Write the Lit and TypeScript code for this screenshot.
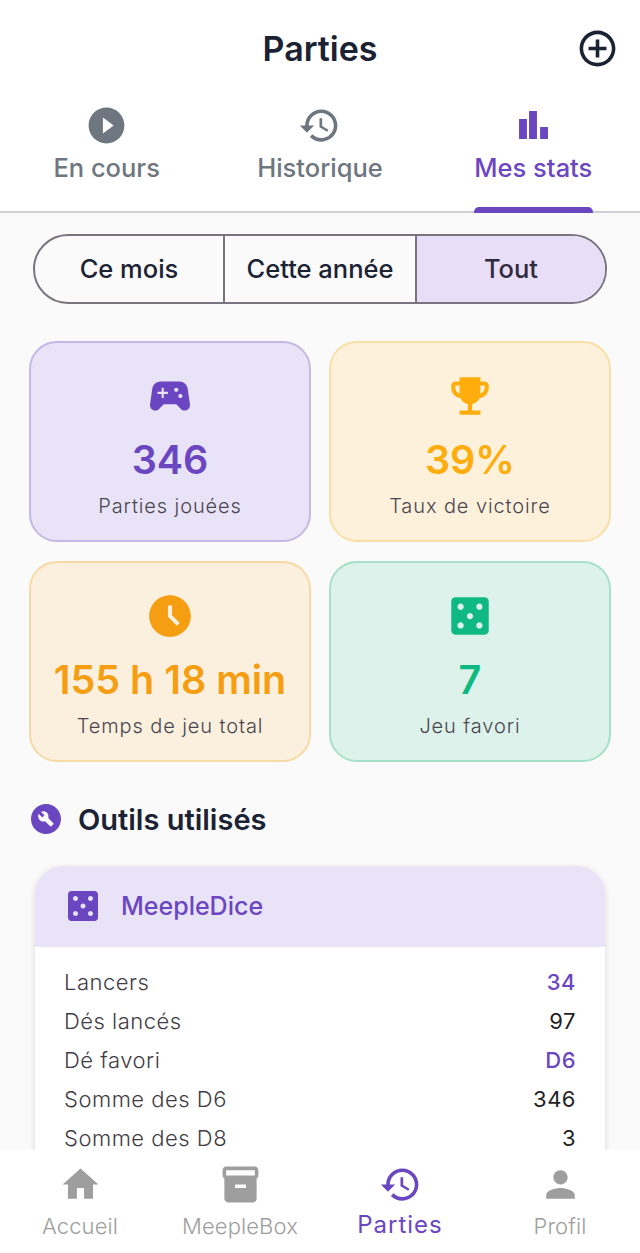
import { LitElement, html, css, svg } from "lit";
import { customElement } from "lit/decorators.js";

const ICONS: Record<string, string> = {
  add: "M13 7h-2v4H7v2h4v4h2v-4h4v-2h-4V7zm-1-5C6.48 2 2 6.48 2 12s4.48 10 10 10 10-4.48 10-10S17.52 2 12 2zm0 18c-4.41 0-8-3.59-8-8s3.59-8 8-8 8 3.59 8 8-3.59 8-8 8z",
  play: "M12 2C6.48 2 2 6.48 2 12s4.48 10 10 10 10-4.48 10-10S17.52 2 12 2zm-2 14.5v-9l6 4.5-6 4.5z",
  history:
    "M13 3c-4.97 0-9 4.03-9 9H1l3.89 3.89.07.14L9 12H6c0-3.87 3.13-7 7-7s7 3.13 7 7-3.13 7-7 7c-1.93 0-3.68-.79-4.94-2.06l-1.42 1.42C8.27 19.99 10.51 21 13 21c4.97 0 9-4.03 9-9s-4.03-9-9-9zm-1 5v5l4.28 2.54.72-1.21-3.5-2.08V8H12z",
  bars: "M5.3 9.1h3.8v9.6H5.3zM10.1 5.3h3.8v13.4h-3.8zM15.4 13h3.8v5.7h-3.8z",
  gamepad:
    "M21.58 16.09l-1.09-7.66C20.21 6.46 18.52 5 16.53 5H7.47C5.48 5 3.79 6.46 3.51 8.43l-1.09 7.66C2.2 17.63 3.39 19 4.94 19c.68 0 1.32-.27 1.8-.75L9 16h6l2.25 2.25c.48.48 1.13.75 1.8.75 1.56 0 2.75-1.37 2.53-2.91zM11 11H9v2H8v-2H6v-1h2V8h1v2h2v1zm4-1c-.55 0-1-.45-1-1s.45-1 1-1 1 .45 1 1-.45 1-1 1zm2 3c-.55 0-1-.45-1-1s.45-1 1-1 1 .45 1 1-.45 1-1 1z",
  trophy:
    "M19 5h-2V3H7v2H5c-1.1 0-2 .9-2 2v1c0 2.55 1.92 4.63 4.39 4.94.63 1.5 1.98 2.63 3.61 2.96V19H7v2h10v-2h-4v-3.1c1.63-.33 2.98-1.46 3.61-2.96C19.08 12.63 21 10.55 21 8V7c0-1.1-.9-2-2-2zM5 8V7h2v3.82C5.84 10.4 5 9.3 5 8zm14 0c0 1.3-.84 2.4-2 2.82V7h2v1z",
  clock:
    "M11.99 2C6.47 2 2 6.48 2 12s4.47 10 9.99 10C17.52 22 22 17.52 22 12S17.52 2 11.99 2zM15.29 16.71 11 12.41V7h2v4.59l3.71 3.71-1.42 1.41z",
  dice: "M19 3H5c-1.1 0-2 .9-2 2v14c0 1.1.9 2 2 2h14c1.1 0 2-.9 2-2V5c0-1.1-.9-2-2-2zM7.5 18c-.83 0-1.5-.67-1.5-1.5S6.67 15 7.5 15s1.5.67 1.5 1.5S8.33 18 7.5 18zm0-9C6.67 9 6 8.33 6 7.5S6.67 6 7.5 6 9 6.67 9 7.5 8.33 9 7.5 9zm4.5 4.5c-.83 0-1.5-.67-1.5-1.5s.67-1.5 1.5-1.5 1.5.67 1.5 1.5-.67 1.5-1.5 1.5zm4.5 4.5c-.83 0-1.5-.67-1.5-1.5s.67-1.5 1.5-1.5 1.5.67 1.5 1.5-.67 1.5-1.5 1.5zm0-9c-.83 0-1.5-.67-1.5-1.5S15.67 6 16.5 6s1.5.67 1.5 1.5S17.33 9 16.5 9z",
  wrench:
    "M12 2C6.48 2 2 6.48 2 12c0 5.52 4.48 10 10 10s10-4.48 10-10C22 6.48 17.52 2 12 2zM16.9 15.49l-1.4 1.4c-.2.2-.51.2-.71 0l-3.41-3.41c-1.22.43-2.64.17-3.62-.81-1.11-1.11-1.3-2.79-.59-4.1l2.35 2.35 1.41-1.41L8.58 7.17c1.32-.71 2.99-.52 4.1.59.98.98 1.24 2.4.81 3.62l3.41 3.41c.19.19.19.51 0 .7z",
  home: "M10 20v-6h4v6h5v-8h3L12 3 2 12h3v8z",
  box: "M20 2H4c-1 0-2 .9-2 2v3.01c0 .72.43 1.34 1 1.69V20c0 1.1 1.1 2 2 2h14c.9 0 2-.9 2-2V8.7c.57-.35 1-.97 1-1.69V4c0-1.1-1-2-2-2zm-5 12H9v-2h6v2zm5-7H4V4l16-.02V7z",
  person:
    "M12 12c2.21 0 4-1.79 4-4s-1.79-4-4-4-4 1.79-4 4 1.79 4 4 4zm0 2c-2.67 0-8 1.34-8 4v2h16v-2c0-2.66-5.33-4-8-4z",
};

const icon = (name: string, size: number) => html`<svg
  class="icon"
  width=${size}
  height=${size}
  viewBox="0 0 24 24"
  fill="currentColor"
>
  ${svg`<path fill-rule="evenodd" d=${ICONS[name]}></path>`}
</svg>`;

const TABS = [
  { icon: "play", label: "En cours", size: 43 },
  { icon: "history", label: "Historique", size: 43 },
  { icon: "bars", label: "Mes stats", size: 50, active: true },
];

const STATS = [
  { icon: "gamepad", value: "346", label: "Parties jouées", tone: "violet" },
  { icon: "trophy", value: "39%", label: "Taux de victoire", tone: "amber" },
  { icon: "clock", value: "155 h 18 min", label: "Temps de jeu total", tone: "orange" },
  { icon: "dice", value: "7", label: "Jeu favori", tone: "green" },
];

const ROWS = [
  { label: "Lancers", value: "34", accent: true },
  { label: "Dés lancés", value: "97" },
  { label: "Dé favori", value: "D6", accent: true },
  { label: "Somme des D6", value: "346" },
  { label: "Somme des D8", value: "3" },
];

const NAV = [
  { icon: "home", label: "Accueil" },
  { icon: "box", label: "MeepleBox" },
  { icon: "history", label: "Parties", active: true },
  { icon: "person", label: "Profil" },
];

@customElement("app-root")
export class AppRoot extends LitElement {
  static styles = css`
    :host {
      display: flex;
      flex-direction: column;
      height: 1253px;
      overflow: hidden;
      background: #fafafa;
      color: #1a2233;
      font-family: Inter, "Liberation Sans", sans-serif;
    }

    .icon {
      display: block;
      flex: none;
    }

    .top {
      background: #fff;
      flex: none;
    }

    .titlebar {
      display: grid;
      grid-template-columns: 1fr auto 1fr;
      align-items: center;
      height: 96px;
      padding: 0 21px;
    }

    .titlebar h1 {
      grid-column: 2;
      margin: 0;
      font-size: 34px;
      font-weight: 600;
    }

    .add {
      justify-self: end;
      color: #1a2233;
    }

    .tabs {
      display: grid;
      grid-template-columns: repeat(3, 1fr);
      height: 117px;
      box-sizing: border-box;
      border-bottom: 2px solid #d0d0d4;
    }

    .tab {
      display: flex;
      flex-direction: column;
      align-items: center;
      color: #6e7680;
      font-size: 25.5px;
      font-weight: 500;
    }

    .tab .glyph {
      height: 58px;
      display: flex;
      align-items: center;
    }

    .tab .name {
      line-height: 27px;
    }

    .tab.active {
      color: #6b46c1;
    }

    .tab .mark {
      margin-top: auto;
      margin-bottom: -2px;
      width: 119px;
      height: 6px;
      border-radius: 5px 5px 0 0;
      background: #6b46c1;
    }

    main {
      flex: 1;
      min-height: 0;
      overflow: hidden;
      padding-top: 21px;
    }

    .segments {
      display: grid;
      grid-template-columns: 188px 192px 1fr;
      height: 70px;
      margin: 0 33px;
      box-sizing: border-box;
      border: 2px solid #79747e;
      border-radius: 35px;
      overflow: hidden;
    }

    .segments div {
      display: flex;
      align-items: center;
      justify-content: center;
      padding-bottom: 2px;
      font-size: 25.5px;
      font-weight: 500;
    }

    .segments div + div {
      border-left: 2px solid #79747e;
    }

    .segments .on {
      background: #e8def8;
      color: #2f2a3d;
    }

    .stats {
      display: grid;
      grid-template-columns: 1fr 1fr;
      gap: 19px 18px;
      margin: 37px 29px 0;
    }

    .stat {
      display: flex;
      flex-direction: column;
      align-items: center;
      height: 201px;
      box-sizing: border-box;
      padding-top: 28px;
      border: 2px solid;
      border-radius: 28px;
    }

    .stat strong {
      margin-top: 15px;
      font-size: 39.5px;
      font-weight: 600;
      line-height: 48px;
    }

    .stat span {
      margin-top: 10px;
      color: #4a4650;
      font-size: 20px;
      font-weight: 300;
      line-height: 24px;
      letter-spacing: 0.9px;
    }

    .violet {
      background: #e8e3f6;
      border-color: #c4b8e4;
      color: #6b46c1;
    }

    .amber {
      background: #fdf1dc;
      border-color: #f8dfa6;
      color: #ffad0d;
    }

    .orange {
      background: #fbf0de;
      border-color: #f7d9a4;
      color: #f59e12;
    }

    .green {
      background: #dcf2ea;
      border-color: #a6e0c9;
      color: #10b981;
    }

    .section {
      display: flex;
      align-items: center;
      gap: 14px;
      margin: 35px 0 0 28px;
      height: 44px;
      font-size: 29px;
      font-weight: 600;
    }

    .section .icon {
      color: #6b46c1;
    }

    .tool {
      margin: 25px 35px 0;
      border-radius: 28px;
      background: #fff;
      box-shadow: 0 2px 6px rgba(0, 0, 0, 0.14);
      overflow: hidden;
    }

    .tool header {
      display: flex;
      align-items: center;
      gap: 18px;
      height: 81px;
      box-sizing: border-box;
      padding: 0 0 1px 28px;
      background: #e8e3f6;
      color: #6b46c1;
      font-size: 25px;
      font-weight: 500;
    }

    .rows {
      padding: 15px 29px;
    }

    .row {
      display: flex;
      justify-content: space-between;
      height: 39px;
      align-items: center;
      color: #3f3c46;
      font-size: 22px;
      font-weight: 300;
      letter-spacing: 0.5px;
    }

    .row b {
      font-weight: 400;
      color: #1f1f24;
    }

    .row b.accent {
      color: #6b46c1;
      font-weight: 500;
    }

    nav {
      flex: none;
      display: grid;
      grid-template-columns: repeat(4, 1fr);
      height: 103px;
      background: #fff;
    }

    nav a {
      display: flex;
      flex-direction: column;
      align-items: center;
      padding-top: 13px;
      color: #9e9e9e;
      font-size: 22px;
      font-weight: 300;
      letter-spacing: 0.1px;
    }

    nav a span {
      margin-top: 7px;
      line-height: 26px;
    }

    nav a.active {
      color: #6b46c1;
      font-size: 24px;
      font-weight: 400;
      letter-spacing: 1px;
    }

    nav a.active span {
      margin-top: 4px;
      line-height: 29px;
    }
  `;

  render() {
    return html`
      <div class="top">
        <div class="titlebar">
          <h1>Parties</h1>
          <div class="add">${icon("add", 43)}</div>
        </div>
        <div class="tabs">
          ${TABS.map(
            (t) => html`<div class="tab ${t.active ? "active" : ""}">
              <div class="glyph">${icon(t.icon, t.size)}</div>
              <div class="name">${t.label}</div>
              ${t.active ? html`<div class="mark"></div>` : ""}
            </div>`
          )}
        </div>
      </div>
      <main>
        <div class="segments">
          <div>Ce mois</div>
          <div>Cette année</div>
          <div class="on">Tout</div>
        </div>
        <div class="stats">
          ${STATS.map(
            (s) => html`<div class="stat ${s.tone}">
              ${icon(s.icon, 50)}
              <strong>${s.value}</strong>
              <span>${s.label}</span>
            </div>`
          )}
        </div>
        <div class="section">${icon("wrench", 36)}Outils utilisés</div>
        <div class="tool">
          <header>${icon("dice", 40)}MeepleDice</header>
          <div class="rows">
            ${ROWS.map(
              (r) => html`<div class="row">
                <span>${r.label}</span>
                <b class=${r.accent ? "accent" : ""}>${r.value}</b>
              </div>`
            )}
          </div>
        </div>
      </main>
      <nav>
        ${NAV.map(
          (n) => html`<a class=${n.active ? "active" : ""}>
            ${icon(n.icon, 43)}
            <span>${n.label}</span>
          </a>`
        )}
      </nav>
    `;
  }
}
